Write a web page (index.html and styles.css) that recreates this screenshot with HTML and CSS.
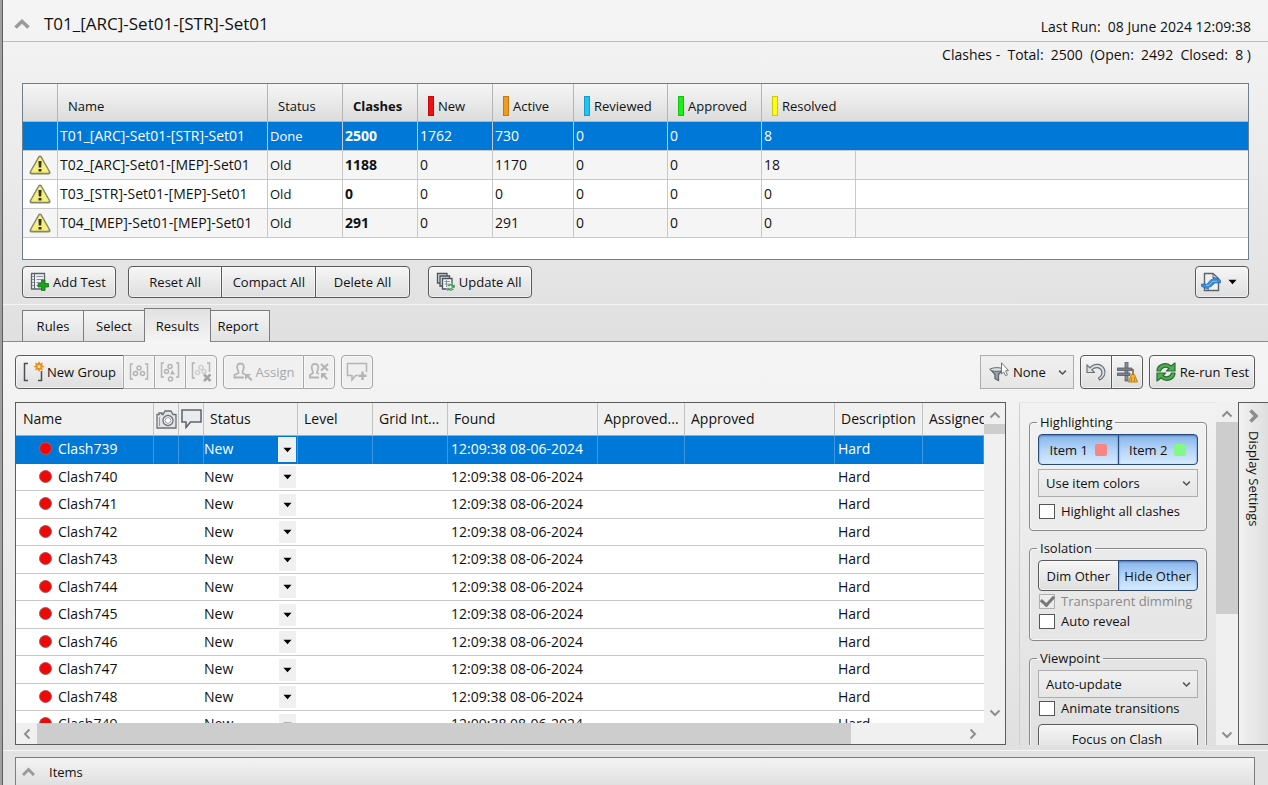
FILE: index.html
```html
<!DOCTYPE html>
<html lang="en">
<head>
	<meta charset="UTF-8">
	<meta name="viewport" content="width=device-width, initial-scale=1">
	<title>Clash Detective</title>
	<link rel="stylesheet" href="styles.css">
</head>
<body>
<!-- shared icons -->
<svg class="sprite" aria-hidden="true">
	<symbol id="i-warn" viewBox="0 0 22 20">
		<path d="M11 2.500 L19.500 17.500 H2.500 Z" fill="#85856a" stroke="#85856a" stroke-width="4" stroke-linejoin="round"/>
		<path d="M11 3 L19 17 H3 Z" fill="#f6f07a" stroke="#f6f07a" stroke-width="1.600" stroke-linejoin="round"/>
		<path d="M9.400 6 h3.200 l-.4 6.500 h-2.400 z M9.500 14 h3 v2.600 h-3 z" fill="#333"/>
	</symbol>
	<symbol id="i-down" viewBox="0 0 10 6">
		<path d="M0.500 0.500 H9.500 L5 5.500 Z"/>
	</symbol>
	<symbol id="i-chev" viewBox="0 0 12 8">
		<path d="M1.500 1.500 L6 6 L10.500 1.500" fill="none" stroke="currentColor" stroke-width="2"/>
	</symbol>
	<symbol id="i-camera" viewBox="0 0 21 19">
		<path d="M1 4.500 H3 V3 H6 V4.500 H7 L9 1 H15 L17 4.500 H20 V18 H1 Z" fill="#e2e4e8" stroke="#6b7076" stroke-width="1.300"/>
		<path d="M3.500 7 V16" stroke="#9a9fa6"/>
		<circle cx="12" cy="10.500" r="5" fill="#f6f7f9" stroke="#6b7076" stroke-width="1.300"/>
		<circle cx="12" cy="10.500" r="2.800" fill="#fff" stroke="#9a9fa6"/>
	</symbol>
	<symbol id="i-comment" viewBox="0 0 21 20">
		<path d="M1 1 H20 V13 H9.500 L5 18.500 V13 H1 Z" fill="#e9ebef" stroke="#5d6268" stroke-width="1.500"/>
	</symbol>
</svg>

<div class="app">
	<header class="title-bar">
		<button class="fold" aria-label="Collapse"><svg width="16" height="10" viewBox="0 0 16 10"><path d="M1.500 8.500 L8 2.500 L14.500 8.500" fill="none" stroke="#9a9a9a" stroke-width="3.500"/></svg></button>
		<h1>T01_[ARC]-Set01-[STR]-Set01</h1>
		<p class="last-run">Last Run:&nbsp; 08 June 2024 12:09:38</p>
	</header>

	<section class="tests">
		<p class="totals">Clashes -&nbsp; Total:&nbsp; 2500&nbsp; (Open:&nbsp; 2492&nbsp; Closed:&nbsp; 8 )</p>
		<div class="tests-box">
			<table class="tests-table">
				<colgroup>
					<col class="w35"><col class="w210"><col class="w75"><col class="w75"><col class="w75"><col class="w81"><col class="w94"><col class="w94"><col class="w94"><col>
				</colgroup>
				<thead>
					<tr>
						<th></th>
						<th>Name</th>
						<th>Status</th>
						<th class="bold">Clashes</th>
						<th><span class="flag new"></span>New</th>
						<th><span class="flag active"></span>Active</th>
						<th><span class="flag reviewed"></span>Reviewed</th>
						<th><span class="flag approved"></span>Approved</th>
						<th class="open"><span class="flag resolved"></span>Resolved</th>
						<th></th>
					</tr>
				</thead>
				<tbody>
					<tr class="selected">
						<td></td><td>T01_[ARC]-Set01-[STR]-Set01</td><td class="state">Done</td><td class="bold">2500</td><td>1762</td><td>730</td><td>0</td><td>0</td><td class="open">8</td><td></td>
					</tr>
					<tr>
						<td class="mark"><svg width="22" height="20"><use href="#i-warn"/></svg></td><td>T02_[ARC]-Set01-[MEP]-Set01</td><td class="state">Old</td><td class="bold">1188</td><td>0</td><td>1170</td><td>0</td><td>0</td><td>18</td><td></td>
					</tr>
					<tr>
						<td class="mark"><svg width="22" height="20"><use href="#i-warn"/></svg></td><td>T03_[STR]-Set01-[MEP]-Set01</td><td class="state">Old</td><td class="bold">0</td><td>0</td><td>0</td><td>0</td><td>0</td><td>0</td><td></td>
					</tr>
					<tr>
						<td class="mark"><svg width="22" height="20"><use href="#i-warn"/></svg></td><td>T04_[MEP]-Set01-[MEP]-Set01</td><td class="state">Old</td><td class="bold">291</td><td>0</td><td>291</td><td>0</td><td>0</td><td>0</td><td></td>
					</tr>
				</tbody>
			</table>
		</div>
		<div class="test-buttons">
			<button class="btn">
				<svg width="20" height="20" viewBox="0 0 20 20">
					<path d="M1.500 1.500 H14.500 V17 H1.500 Z" fill="#eef1f4" stroke="#5c636b" stroke-width="1.300"/>
					<path d="M4.500 1 V17" stroke="#5c636b"/>
					<path d="M6.500 4.500 H13 M6.500 7.500 H13 M6.500 10.500 H11 M6.500 13.500 H9 M2 4.500 H4 M2 7.500 H4 M2 10.500 H4 M2 13.500 H4" stroke="#8a929a"/>
					<path d="M11.500 8 H15 V11.500 H18.500 V15 H15 V18.500 H11.500 V15 H8 V11.500 H11.500 Z" fill="#1fa01f" stroke="#14741a" stroke-width=".8"/>
				</svg>
				Add Test
			</button>
			<div class="group wide">
				<button class="btn">Reset All</button>
				<button class="btn">Compact All</button>
				<button class="btn">Delete All</button>
			</div>
			<button class="btn">
				<svg width="20" height="20" viewBox="0 0 20 20">
					<g fill="#d9dee3" stroke="#4a525b" stroke-width="1.300">
						<path d="M1.500 1.500 H11 V11 H1.500 Z"/>
						<path d="M4 4 H13.500 V14 H4 Z"/>
						<path d="M6.500 6.500 H16 V17 H6.500 Z" fill="#f4f6f8"/>
					</g>
					<path d="M8.500 9.500 H14 M8.500 12 H14 M10.500 8 V15" stroke="#8a929a"/>
					<path d="M11 14 C12 11.500 16 11 17.500 13 L19 12 V16 H15 L16.200 14.600 C15 13.400 13.500 13.600 13 14.500 Z M18.500 16.500 C17.500 19 14 19.600 12.500 18.200 L11 19.500 V15.800 H14.500 L13.700 17 C14.800 17.800 16 17.500 16.500 16.500 Z" fill="#2f9a45" stroke="#fff" stroke-width=".4"/>
				</svg>
				Update All
			</button>
			<button class="btn export" aria-label="Export report">
				<svg width="20" height="20" viewBox="0 0 20 20">
					<path d="M3.500 1.500 H12 L17.500 6.500 V18.500 H3.500 Z" fill="#eef1f4" stroke="#5c636b" stroke-width="1.400"/>
					<path d="M12 1.500 V6.500 H17.500" fill="none" stroke="#5c636b"/>
					<path d="M0.500 12 H6 L10 7.500 H12.500 V5 L19.500 8 V11 H14 L9.500 15 H7.500 V17.500 L0.500 14.500 Z" fill="#3d8ad2" stroke="#1e62a8" stroke-width=".6"/>
					<path d="M5 13.300 H8 L11.500 9.300 H16" fill="none" stroke="#8cc2f0"/>
				</svg>
				<svg width="9" height="6"><use href="#i-down"/></svg>
			</button>
		</div>
	</section>

	<nav class="tabs" role="tablist">
		<button class="tab" role="tab">Rules</button>
		<button class="tab" role="tab">Select</button>
		<button class="tab current" role="tab" aria-selected="true">Results</button>
		<button class="tab" role="tab">Report</button>
	</nav>

	<main class="results">
		<div class="toolbar">
			<div class="group">
				<button class="btn new-group">
					<svg width="22" height="22" viewBox="0 0 22 22">
						<path d="M5 2.500 H1.500 V19.500 H5 M15 19.500 H18.500 V10" fill="none" stroke="#4a4f55" stroke-width="1.500"/>
						<path d="M16 0 L17.300 2.600 L20 1.500 L19 4.200 L21.500 5.500 L19 6.800 L20 9.500 L17.300 8.400 L16 11 L14.700 8.400 L12 9.500 L13 6.800 L10.500 5.500 L13 4.200 L12 1.500 L14.700 2.600 Z" fill="#f08a1c"/>
						<circle cx="16" cy="5.500" r="1.600" fill="#fde3b0"/>
					</svg>
					New Group
				</button>
				<button class="btn icon" disabled aria-label="Group">
					<svg width="20" height="20" viewBox="0 0 20 20" fill="none" stroke="#b4b4b4" stroke-width="1.500"><path d="M4 2 H1.500 V17 H4 M16 2 H18.500 V17 H16"/><circle cx="10" cy="6" r="2"/><circle cx="6.500" cy="11.500" r="2"/><circle cx="13.500" cy="11.500" r="2"/></svg>
				</button>
				<button class="btn icon" disabled aria-label="Remove from group">
					<svg width="20" height="20" viewBox="0 0 20 20" fill="none" stroke="#b4b4b4" stroke-width="1.500"><path d="M4 1 H1.500 V15 H4 M16 1 H18.500 V15 H16"/><circle cx="10" cy="4.500" r="2"/><circle cx="6.500" cy="9.500" r="2"/><circle cx="10.500" cy="17" r="2"/><path d="M10 12.500 L12.500 8 L15 12.500 Z" fill="#b4b4b4" stroke="none"/></svg>
				</button>
				<button class="btn icon" disabled aria-label="Explode group">
					<svg width="20" height="20" viewBox="0 0 20 20" fill="none" stroke="#b4b4b4" stroke-width="1.500"><path d="M4 1 H1.500 V16 H4 M16 1 H18.500 V10"/><g stroke="#cfcfcf"><circle cx="10" cy="5.500" r="2"/><circle cx="6.500" cy="10.500" r="2"/><circle cx="13" cy="9.500" r="2"/></g><path d="M13 12.500 L19.500 19 M19.500 12.500 L13 19" stroke="#a4a4a4" stroke-width="2.500"/></svg>
				</button>
			</div>
			<div class="group">
				<button class="btn assign" disabled>
					<svg width="20" height="20" viewBox="0 0 20 20" fill="none" stroke="#b4b4b4" stroke-width="1.800"><path d="M7.500 1.500 C10.500 1.500 11.500 4 10.500 7 C10 9 9.500 9.500 9.500 11 L12 12.500 M7.500 1.500 C4.500 1.500 3.500 4 4.500 7 C5 9 5.500 9.500 5.500 11 L1.500 13 V15.500 H11"/><path d="M12 12 H18 L16 14 L19.500 17.500 L18 19 L14.500 15.500 L12 18 Z" fill="#b4b4b4" stroke="none"/></svg>
					Assign
				</button>
				<button class="btn icon" disabled aria-label="Unassign">
					<svg width="20" height="20" viewBox="0 0 20 20" fill="none" stroke="#b4b4b4" stroke-width="1.800"><path d="M6 2 C9 2 10 4.500 9 7 C8.500 9 8 9.500 8 11 L10 12 M6 2 C3 2 2 4.500 3 7 C3.500 9 4 9.500 4 11 L1 13 V15.500 H10"/><path d="M12 2 L19 8.500 M19 2 L12 8.500" stroke-width="2.300"/><path d="M12 11 H18 L16 13 L19 16.500 L17.500 18 L14.500 14.500 L12 17 Z" fill="#b4b4b4" stroke="none"/></svg>
				</button>
			</div>
			<button class="btn icon" disabled aria-label="Add comment">
				<svg width="22" height="20" viewBox="0 0 22 20" fill="none" stroke="#b4b4b4" stroke-width="1.500"><path d="M12 13.500 H9.500 L6 18 V13.500 H1.500 V1.500 H20.500 V10"/><path d="M16.500 9.500 V18 M12.500 13.800 H20.500" stroke-width="2.400"/></svg>
			</button>

			<div class="pick filter">
				<svg class="pick-icon" width="22" height="20" viewBox="0 0 22 20">
					<path d="M1.500 7.500 H14 L9.500 12.500 V18.500 L6 16.500 V12.500 Z" fill="#9aa1a9" stroke="#5c636b" stroke-width="1.300"/>
					<ellipse cx="7.800" cy="7.500" rx="6.500" ry="1.800" fill="#dfe3e7" stroke="#5c636b"/>
					<path d="M12.500 .8 L19.500 8.500 L16.500 8.800 L18.500 12.800 L16.500 13.800 L14.700 10 L12.500 12 Z" fill="#fff" stroke="#777"/>
				</svg>
				<select aria-label="Filter"><option>None</option></select>
				<svg class="pick-arrow" width="9" height="7"><use href="#i-chev"/></svg>
			</div>
			<div class="group">
				<button class="btn icon" aria-label="Reset">
					<svg width="22" height="20" viewBox="0 0 22 20"><path d="M2 3 V10.500 H9.500 L6.800 7.800 C10 4.500 15 5 16.500 8.500 C17.500 11.500 16 14.500 13.500 16 L14.500 18 C19 16 21 11.500 19.500 7.500 C17 1.500 9.500 .5 5 5.900 Z" fill="#dde0e4" stroke="#6b7076" stroke-width="1.200" stroke-linejoin="round"/></svg>
				</button>
				<button class="btn icon" aria-label="Compact">
					<svg width="21" height="21" viewBox="0 0 21 21"><path d="M8 0 H11 V19 H8 Z" fill="#8a9098" stroke="#565c64" stroke-width=".8"/><path d="M0 6 H15 V8.500 H0 Z M0 11 H13 V13.500 H0 Z" fill="#7c838b" stroke="#565c64" stroke-width=".8"/><path d="M16 7 V13" stroke="#8a5a20" stroke-width="1.500"/><path d="M14.500 12.500 H17.500 L20.500 20 H11.500 Z" fill="#f5b52c" stroke="#b57a12" stroke-width=".9"/><path d="M14.500 15.500 V19.500 M17.500 15.500 V19.500" stroke="#b57a12" stroke-width=".8"/></svg>
				</button>
			</div>
			<button class="btn rerun">
				<svg width="22" height="20" viewBox="0 0 22 20"><path d="M2 9 C2 3 10 -1 16 4 L20 1 V9 H11.500 L14 6.500 C11 4 6.500 5 5.500 9 Z M20 11 C20 17 12 21 6 16 L2 19 V11 H10.500 L8 13.500 C11 16 15.500 15 16.500 11 Z" fill="#4fae52" stroke="#2b6b33" stroke-width="1.200" stroke-linejoin="round"/></svg>
				Re-run Test
			</button>
		</div>

		<div class="content">
			<div class="clash-box">
				<div class="clash-view">
					<table class="clash-table">
						<colgroup>
							<col class="w138"><col class="w25"><col class="w25"><col class="w94"><col class="w75"><col class="w75"><col class="w150"><col class="w87"><col class="w150"><col class="w88"><col>
						</colgroup>
						<thead>
							<tr>
								<th>Name</th>
								<th class="pic"><svg width="21" height="19" role="img" aria-label="Viewpoint"><use href="#i-camera"/></svg></th>
								<th class="pic"><svg width="21" height="20" role="img" aria-label="Comments"><use href="#i-comment"/></svg></th>
								<th>Status</th>
								<th>Level</th>
								<th>Grid Int...</th>
								<th>Found</th>
								<th>Approved...</th>
								<th>Approved</th>
								<th>Description</th>
								<th>Assigned</th>
							</tr>
						</thead>
						<tbody id="clashes"></tbody>
					</table>
				</div>
				<div class="bar-v">
					<svg class="up" width="12" height="8"><use href="#i-chev"/></svg>
					<span class="thumb"></span>
					<svg class="end" width="12" height="8"><use href="#i-chev"/></svg>
				</div>
				<div class="bar-h">
					<svg class="left" width="12" height="8"><use href="#i-chev"/></svg>
					<span class="thumb"></span>
					<svg class="right" width="12" height="8"><use href="#i-chev"/></svg>
				</div>
				<div class="corner"></div>
			</div>

			<aside class="settings">
				<div class="settings-list">
					<fieldset>
						<legend>Highlighting</legend>
						<div class="group toggles">
							<button class="btn on" aria-pressed="true">Item 1<span class="swatch red"></span></button>
							<button class="btn on" aria-pressed="true">Item 2<span class="swatch green"></span></button>
						</div>
						<div class="pick spaced">
							<select aria-label="Item colors"><option>Use item colors</option></select>
							<svg class="pick-arrow" width="9" height="7"><use href="#i-chev"/></svg>
						</div>
						<label class="check spaced"><input type="checkbox"> Highlight all clashes</label>
					</fieldset>
					<fieldset>
						<legend>Isolation</legend>
						<div class="group toggles">
							<button class="btn">Dim Other</button>
							<button class="btn on" aria-pressed="true">Hide Other</button>
						</div>
						<label class="check off"><input type="checkbox" checked disabled> Transparent dimming</label>
						<label class="check"><input type="checkbox"> Auto reveal</label>
					</fieldset>
					<fieldset>
						<legend>Viewpoint</legend>
						<div class="pick">
							<select aria-label="Viewpoint"><option>Auto-update</option></select>
							<svg class="pick-arrow" width="9" height="7"><use href="#i-chev"/></svg>
						</div>
						<label class="check"><input type="checkbox"> Animate transitions</label>
						<button class="btn focus">Focus on Clash</button>
					</fieldset>
				</div>
				<div class="bar-v side">
					<svg class="up" width="12" height="8"><use href="#i-chev"/></svg>
					<span class="thumb"></span>
					<svg class="end" width="12" height="8"><use href="#i-chev"/></svg>
				</div>
				<button class="side-tab">
					<svg width="10" height="14" viewBox="0 0 10 14"><path d="M1.500 1.500 L7 7 L1.500 12.500" fill="none" stroke="#8c8c8c" stroke-width="3.500"/></svg>
					<span>Display Settings</span>
				</button>
			</aside>
		</div>
	</main>

	<footer class="items">
		<button class="items-bar">
			<svg width="13" height="9" viewBox="0 0 13 9"><path d="M1 8 L6.500 2.500 L12 8" fill="none" stroke="#9a9a9a" stroke-width="3"/></svg>
			Items
		</button>
	</footer>
</div>
<script>
	var first = 739, last = 749, rows = '';
	for (var n = first; n <= last; n++) {
		rows += '<tr' + (n == first ? ' class="selected"' : '') + '>' +
			'<td><span class="dot"></span>Clash' + n + '</td><td></td><td></td>' +
			'<td class="status"><div class="pick plain"><select aria-label="Status of Clash' + n + '"><option>New</option></select>' +
			'<span class="drop"><svg width="9" height="6"><use href="#i-down"/></svg></span></div></td>' +
			'<td></td><td></td><td>12:09:38 08-06-2024</td><td></td><td></td><td>Hard</td><td></td></tr>';
	}
	document.getElementById('clashes').innerHTML = rows;
</script>
</body>
</html>
```
FILE: styles.css
```css
* {
	box-sizing: border-box;
}
body {
	margin: 0;
	font-family: "Open Sans", "Noto Sans", sans-serif;
	font-size: 13px;
	line-height: 18px;
	color: #111;
}
button, select, input {
	margin: 0;
	font: inherit;
	color: inherit;
}
h1, p {
	margin: 0;
	font-weight: 400;
}
svg {
	display: block;
	flex: none;
}
.sprite {
	display: none;
}
.app {
	display: flex;
	flex-direction: column;
	height: 100vh;
	overflow: hidden;
	border-left: 2px solid #a0a0a0;
	box-shadow: inset 1px 0 #5e5e5e;
	background: linear-gradient(#f5f5f5, #e0e0e0 340px);
	padding-left: 1px;
}

/* title */
.title-bar {
	display: flex;
	align-items: center;
	height: 42px;
	padding: 7px 17px 0 11px;
	border-bottom: 1px solid #bdbdbd;
}
.fold {
	padding: 0;
	border: 0;
	background: none;
}
.title-bar h1 {
	margin-left: 14px;
	font-size: 17px;
	line-height: 24px;
}
.last-run {
	margin-left: auto;
	padding-top: 6px;
	font-size: 14px;
}

/* tests */
.tests {
	padding: 3px 19px 6px 19px;
	border-bottom: 1px solid #f4f4f4;
}
.totals {
	text-align: right;
	margin-right: -2px;
	font-size: 14px;
	line-height: 20px;
}
.tests-box {
	height: 177px;
	margin-top: 18px;
	border: 1px solid #6f7f90;
	background: #fff;
}
table {
	width: 100%;
	table-layout: fixed;
	border-collapse: separate;
	border-spacing: 0;
}
th, td {
	overflow: hidden;
	white-space: nowrap;
	text-align: left;
	font-weight: 400;
}
.w25 { width: 25px; }
.w35 { width: 35px; }
.w75 { width: 75px; }
.w81 { width: 81px; }
.w87 { width: 87px; }
.w88 { width: 88px; }
.w94 { width: 94px; }
.w138 { width: 138px; }
.w150 { width: 150px; }
.w210 { width: 210px; }
.tests-table th {
	height: 38px;
	padding: 6px 0 0 10px;
	border-right: 1px solid #b4b4b4;
	border-bottom: 1px solid #b4b4b4;
	background: linear-gradient(#f6f6f6, #dcdcdc);
}
.tests-table td {
	height: 29px;
	padding: 0 0 0 2px;
	font-size: 14px;
	border-right: 1px solid #c8c8c8;
	border-bottom: 1px solid #c8c8c8;
}
.tests-table tr:nth-child(even) td {
	background: #f5f5f5;
}
.tests-table .open,
.tests-table th:last-child,
.tests-table td:last-child {
	border-right: 0;
}
.tests-table .state {
	font-size: 13px;
}
.tests-table .mark {
	padding-left: 6px;
}
.tests-table .bold {
	font-weight: 700;
}
.tests-table .selected td {
	background: #0078d7;
	color: #fff;
}
.flag {
	display: inline-block;
	width: 6px;
	height: 20px;
	margin: -4px 4px -4px 0;
	vertical-align: -1px;
	border: 1px solid rgba(0,0,0,.2);
}
.flag.new { background: #f01010; }
.flag.active { background: #f39a1a; }
.flag.reviewed { background: #1cc4f8; }
.flag.approved { background: #18f018; }
.flag.resolved { background: #fcfc14; }

/* buttons */
.btn {
	display: flex;
	align-items: center;
	justify-content: center;
	gap: 3px;
	height: 32px;
	padding: 0 9px 0 7px;
	white-space: nowrap;
	border: 1px solid #5a5a5a;
	border-radius: 4px;
	background: linear-gradient(#f6f6f6, #dedede);
	box-shadow: inset 0 0 0 1px rgba(255,255,255,.5);
}
.btn:disabled {
	color: #a8a8a8;
	border-color: #a6a6a6;
	background: #f0f0f0;
}
.group {
	display: flex;
}
.group .btn {
	border-radius: 0;
}
.group .btn + .btn {
	margin-left: -1px;
}
.group .btn:first-child {
	border-radius: 4px 0 0 4px;
}
.group .btn:last-child {
	border-radius: 0 4px 4px 0;
}
.group.wide {
	width: 282px;
	margin: 0 18px 0 12px;
}
.group.wide .btn {
	flex: 1;
	padding: 0;
}
.test-buttons {
	display: flex;
	margin-top: 6px;
}
.test-buttons .export {
	width: 54px;
	gap: 7px;
	padding: 0 10px 0 4px;
	margin-left: auto;
}

/* tabs */
.tabs {
	display: flex;
	align-items: flex-end;
	height: 37px;
	padding-left: 19px;
	border-bottom: 1px solid #8c8c8c;
}
.tab {
	width: 62px;
	height: 31px;
	padding: 0;
	border: 1px solid #7d7d7d;
	border-bottom: 0;
	background: linear-gradient(#f4f4f4, #e2e2e2);
}
.tab + .tab {
	margin-left: -1px;
}
.tab.current {
	width: 67px;
	height: 34px;
	margin-bottom: -1px;
	z-index: 1;
	background: linear-gradient(#e2e2e2, #f4f4f4);
}
.tab:last-child {
	width: 60px;
	padding-right: 4px;
}

/* results pane */
.results {
	display: flex;
	flex: 1;
	flex-direction: column;
	min-height: 0;
	padding: 13px 0 5px 12px;
	border-bottom: 1px solid #f6f6f6;
	background: linear-gradient(#f5f5f5, #e0e0e0);
}
.toolbar {
	display: flex;
	gap: 6px;
	padding-right: 13px;
}
.toolbar .btn {
	height: 34px;
	padding: 0;
}
.toolbar .icon {
	width: 32px;
}
.toolbar .new-group {
	gap: 2px;
	width: 109px;
}
.toolbar .assign {
	width: 81px;
}
.toolbar .rerun {
	width: 106px;
}
.pick {
	position: relative;
	display: flex;
	align-items: center;
}
.pick select {
	width: 100%;
	height: 28px;
	padding: 0 20px 0 7px;
	appearance: none;
	border: 1px solid #adadad;
	border-radius: 0;
	background: linear-gradient(#f0f0f0, #e6e6e6);
}
.pick-arrow {
	position: absolute;
	right: 7px;
	color: #555;
	pointer-events: none;
}
.pick-icon {
	position: absolute;
	left: 9px;
	pointer-events: none;
}
.filter {
	width: 94px;
	margin-left: auto;
}
.filter select {
	height: 34px;
	padding-left: 32px;
	padding-right: 0;
}
.content {
	display: flex;
	flex: 1;
	gap: 13px;
	min-height: 0;
	margin-top: 13px;
}

/* clash list */
.clash-box {
	display: grid;
	flex: 1;
	grid-template-columns: minmax(0, 1fr) 21px;
	grid-template-rows: minmax(0, 1fr) 21px;
	min-width: 0;
	border: 1px solid #5c5c5c;
	background: #fff;
}
.clash-view {
	overflow: hidden;
}
.clash-table {
	font-size: 14px;
}
.clash-table th {
	height: 33px;
	padding: 0 0 0 6px;
	border-right: 1px solid #c4c4c4;
	border-bottom: 1px solid #a8a8a8;
	background: #f0f0f0;
}
.clash-table th:first-child {
	padding-left: 7px;
}
.clash-table th:last-child {
	border-right: 0;
}
.clash-table th.pic {
	padding: 0 0 0 2px;
}
.clash-table td {
	height: 28px;
	padding: 0 0 1px 3px;
	border-bottom: 1px solid #c8c8c8;
}
.clash-table tr:nth-child(even) td {
	height: 27px;
}
.clash-table td:first-child {
	padding-left: 23px;
}
.clash-table .selected td {
	color: #fff;
	background: #0078d7;
	border-color: #0078d7;
	border-right: 1px solid #3f97df;
}
.dot {
	display: inline-block;
	width: 13px;
	height: 13px;
	margin-right: 6px;
	vertical-align: -1px;
	border: 1px solid #b05a5a;
	border-radius: 50%;
	background: #ee0808;
}
.clash-table .status {
	padding: 0 2px 0 0;
}
.clash-table .selected .status {
	padding-right: 1px;
}
.plain select {
	height: 26px;
	padding: 0 0 1px 0;
	border: 0;
	background: none;
}
.plain option {
	color: #111;
}
.drop {
	position: absolute;
	right: 0;
	display: flex;
	align-items: center;
	justify-content: center;
	width: 17px;
	height: 22px;
	color: #000;
	background: #f0f0f0;
	pointer-events: none;
}
.selected .drop {
	width: 18px;
	height: 25px;
}

/* scroll bars */
.bar-v, .bar-h {
	display: flex;
	align-items: center;
	color: #8e8e8e;
	background: #f0f0f0;
}
.bar-v {
	flex-direction: column;
	padding: 8px 0 6px 0;
}
.bar-v .thumb {
	width: 100%;
	height: 10px;
	margin-top: 5px;
	background: #cdcdcd;
}
.bar-v .end {
	margin-top: auto;
}
.up {
	transform: rotate(180deg);
}
.bar-h {
	padding: 0 5px;
}
.bar-h .thumb {
	align-self: stretch;
	width: 85%;
	margin-left: 4px;
	background: #cdcdcd;
}
.left {
	transform: rotate(90deg);
}
.right {
	margin-left: auto;
	transform: rotate(-90deg);
}
.corner {
	background: #f0f0f0;
}

/* display settings */
.settings {
	display: flex;
	width: 249px;
	min-height: 0;
}
.settings-list {
	flex: 1;
	overflow: hidden;
	padding: 10px 9px 0 9px;
	border-left: 1px solid #cfcfcf;
	border-top: 1px solid #e6e6e6;
}
fieldset {
	margin: 0 0 8px 0;
	padding: 3px 8px 9px 8px;
	border: 1px solid #8a8a8a;
	border-radius: 4px;
	box-shadow: inset 0 0 0 1px rgba(255,255,255,.6);
}
legend {
	margin-left: -1px;
	padding: 0 3px;
	line-height: 18px;
}
.toggles .btn {
	flex: 1;
	height: 31px;
	gap: 7px;
	padding: 0;
}
.btn.on {
	border-color: #2a4a7c;
	background: linear-gradient(#86b4ea, #b4d4f8 50%, #d6ebfc);
	box-shadow: inset 0 1px 2px #4a78b8;
}
.swatch {
	width: 12px;
	height: 12px;
	border-radius: 2px;
}
.swatch.red { background: #f88484; }
.swatch.green { background: #84f884; }
.spaced {
	margin-top: 4px;
}
.check {
	display: flex;
	align-items: center;
	gap: 6px;
	height: 20px;
	padding-left: 1px;
	white-space: nowrap;
}
.check.off {
	color: #8a8a8a;
}
.check input {
	display: grid;
	place-content: center;
	width: 16px;
	height: 15px;
	appearance: none;
	border: 1px solid #555;
	background: #fff;
}
.check input:disabled {
	border-color: #b0b0b0;
	background: #ececec;
}
.check input:checked::before {
	content: "";
	width: 6px;
	height: 10px;
	margin-bottom: 3px;
	border: solid #777;
	border-width: 0 3px 3px 0;
	transform: rotate(42deg);
}
.focus {
	width: 100%;
	height: 30px;
	margin-top: 6px;
}
.side .thumb {
	height: 192px;
	margin-top: 4px;
}
.side {
	width: 22px;
}
.side-tab {
	display: flex;
	flex-direction: column;
	align-items: center;
	width: 30px;
	padding: 6px 0 0 0;
	border: 1px solid #5c5c5c;
	border-right: 0;
	background: linear-gradient(90deg, #f2f2f2, #dedede);
	gap: 8px;
}
.side-tab span {
	writing-mode: vertical-rl;
}

/* items */
.items {
	padding: 6px 13px 0 12px;
	background: #e2e2e2;
}
.items-bar {
	display: flex;
	align-items: center;
	gap: 14px;
	width: 100%;
	height: 28px;
	padding: 0 0 0 6px;
	border: 1px solid #7d7d7d;
	border-bottom: 0;
	background: linear-gradient(#f4f4f4, #e0e0e0);
}
```
